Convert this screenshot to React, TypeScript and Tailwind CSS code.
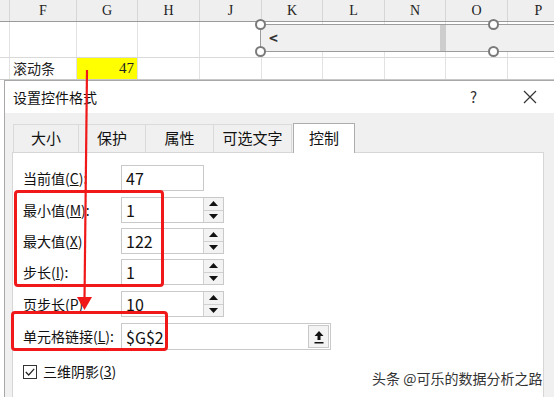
const ui = { fontFamily: '"Noto Sans CJK SC", "Noto Sans", sans-serif' };
const serif = { fontFamily: '"Liberation Serif", "Noto Sans CJK SC", serif' };

const cols = [
  { name: "", w: 10 },
  { name: "F", w: 67 },
  { name: "G", w: 61 },
  { name: "H", w: 62 },
  { name: "J", w: 62 },
  { name: "K", w: 61 },
  { name: "L", w: 62 },
  { name: "N", w: 61 },
  { name: "O", w: 62 },
  { name: "P", w: 62 },
];

function Handle({ x, y }: { x: number; y: number }) {
  return (
    <div
      className="absolute h-[11px] w-[11px] rounded-full border-2 border-[#7a7a7a] bg-white"
      style={{ left: x - 5.5, top: y - 5.5 }}
    />
  );
}

function Spinner() {
  return (
    <div className="flex h-full w-[20px] flex-col border-l border-[#d0d0d0] bg-[#f3f3f3]">
      <div className="flex flex-1 items-center justify-center border-b border-[#d0d0d0]">
        <svg width="9" height="5" viewBox="0 0 9 5">
          <polygon points="0,5 9,5 4.5,0" fill="#111" />
        </svg>
      </div>
      <div className="flex flex-1 items-center justify-center">
        <svg width="9" height="5" viewBox="0 0 9 5">
          <polygon points="0,0 9,0 4.5,5" fill="#111" />
        </svg>
      </div>
    </div>
  );
}

function Row({
  label,
  value,
  spin,
  width,
  className,
}: {
  label: React.ReactNode;
  value: string;
  spin?: boolean;
  width: number;
  className?: string;
}) {
  return (
    <div className={"flex h-[26px] items-center " + (className ?? "")}>
      <div className="w-[98px] text-[14px] text-[#111]">{label}</div>
      <div
        className="flex h-full items-stretch border border-[#c9c9c9] bg-white"
        style={{ width }}
      >
        <div className="flex flex-1 items-center pl-[4px] text-[16px] text-[#111]">{value}</div>
        {spin && <Spinner />}
      </div>
    </div>
  );
}

export default function App() {
  return (
    <div className="relative h-[397px] w-[554px] overflow-hidden bg-white" style={ui}>
      {/* sheet */}
      <div className="h-[80px]">
        <div className="flex h-[22px] border-b border-[#9a9a9a] bg-[#efefef]" style={serif}>
          {cols.map((c, i) => (
            <div
              key={i}
              className="flex shrink-0 items-center justify-center border-r border-[#d6d6d6] text-[14px] text-[#222]"
              style={{ width: c.w }}
            >
              {c.name}
            </div>
          ))}
        </div>
        <div className="flex h-[36px] border-b border-[#d9d9d9]">
          {cols.map((c, i) => (
            <div key={i} className="shrink-0 border-r border-[#e2e2e2]" style={{ width: c.w }} />
          ))}
        </div>
        <div className="flex h-[22px] border-b border-[#c8c8c8]">
          {cols.map((c, i) => (
            <div
              key={i}
              className={
                "flex shrink-0 items-center border-r border-[#e2e2e2] text-[14px] text-[#222] " +
                (i === 2 ? "justify-end bg-[#ffff00] pr-[3px] text-[15px]" : "pl-[3px]")
              }
              style={{ width: c.w, ...(i === 2 ? serif : {}) }}
            >
              {i === 1 ? "滚动条" : i === 2 ? "47" : ""}
            </div>
          ))}
        </div>
      </div>

      {/* scroll bar control */}
      <div className="absolute left-[260px] top-[24px] flex h-[28px] w-[320px] items-center border border-r-0 border-[#9c9c9c] bg-[#f0f0f0]">
        <span className="ml-[8px] text-[15px] font-bold text-[#333]">&lt;</span>
        <div className="ml-[162px] h-full w-[6px] bg-[#cdcdcd]" />
      </div>
      <Handle x={260} y={24} />
      <Handle x={260} y={51} />
      <Handle x={493} y={24} />
      <Handle x={493} y={51} />

      {/* dialog */}
      <div className="ml-[4px] h-[317px] border-l border-t border-[#a8a8a8] bg-[#f0f0f0]">
        <div className="flex h-[32px] items-center bg-white pl-[8px] text-[14px] text-[#111]">
          <span>设置控件格式</span>
          <span className="ml-auto mr-[46px] text-[15px] text-[#333]">?</span>
          <svg className="mr-[17px]" width="14" height="14" viewBox="0 0 14 14">
            <path d="M1 1L13 13M13 1L1 13" stroke="#333" strokeWidth="1.2" />
          </svg>
        </div>
        <div className="flex h-[39px] items-end pl-[8px] text-[15px] text-[#111]">
          {[
            ["大小", 66],
            ["保护", 67],
            ["属性", 68],
            ["可选文字", 78],
          ].map(([t, w]) => (
            <div
              key={t as string}
              className="flex h-[28px] items-center justify-center border-r border-t border-[#dadada] first:border-l"
              style={{ width: w as number }}
            >
              {t}
            </div>
          ))}
          <div className="relative z-10 -mb-px ml-[1px] flex h-[30px] w-[62px] items-center justify-center border border-b-0 border-[#adadad] bg-white">
            控制
          </div>
        </div>
        <div className="ml-[7px] mr-[10px] h-[260px] border border-[#d6d6d6] bg-white pl-[10px] pt-[12px]">
          <Row label={<>当前值(<u>C</u>):</>} value="47" width={83} />
          <Row className="mt-[6px]" label={<>最小值(<u>M</u>):</>} value="1" spin width={103} />
          <Row className="mt-[5px]" label={<>最大值(<u>X</u>)</>} value="122" spin width={103} />
          <Row className="mt-[5px]" label={<>步长(<u>I</u>):</>} value="1" spin width={103} />
          <Row className="mt-[6px]" label={<>页步长(<u>P</u>)</>} value="10" spin width={103} />
          <div className="mt-[6px] flex h-[27px] items-center">
            <div className="w-[98px] text-[14px] text-[#111]">
              单元格链接(<u>L</u>):
            </div>
            <div className="flex h-full w-[210px] items-stretch border border-[#c9c9c9] bg-white">
              <div className="flex flex-1 items-center pl-[4px] text-[16px] text-[#111]">$G$2</div>
              <div className="m-[1px] flex w-[21px] items-center justify-center border border-[#c9c9c9] bg-[#f3f3f3]">
                <svg width="10" height="14" viewBox="0 0 10 14">
                  <polygon points="5,1 9.5,6 6.5,6 6.5,10 3.5,10 3.5,6 0.5,6" fill="#111" />
                  <rect x="0.5" y="12" width="9" height="1.5" fill="#111" />
                </svg>
              </div>
            </div>
          </div>
          <div className="mt-[11px] flex items-center text-[14px] text-[#111]">
            <div className="flex h-[14px] w-[14px] items-center justify-center border border-[#333] bg-white">
              <svg width="10" height="8" viewBox="0 0 10 8">
                <path d="M0.8 4L3.7 7L9.2 0.8" stroke="#222" strokeWidth="1.2" fill="none" />
              </svg>
            </div>
            <span className="ml-[6px]">
              三维阴影(<u>3</u>)
            </span>
          </div>
        </div>
      </div>

      {/* red annotations */}
      <div className="absolute left-[14px] top-[190px] h-[97px] w-[150px] rounded-[4px] border-[3px] border-[#f01818]" />
      <div className="absolute left-[11px] top-[311px] h-[40px] w-[157px] rounded-[4px] border-[3px] border-[#f01818]" />
      <svg className="absolute left-0 top-0" width="554" height="397" viewBox="0 0 554 397">
        <line x1="87" y1="70" x2="84.5" y2="300" stroke="#f01818" strokeWidth="2.2" />
        <polygon points="77,297 92,297 84.5,310" fill="#f01818" />
      </svg>

      {/* watermark */}
      <div
        className="absolute left-[372px] top-[368px] whitespace-nowrap text-[14px] text-[#333]"
        style={{ textShadow: "0 0 2px #fff, 0 0 2px #fff, 1px 1px 1px #fff" }}
      >
        头条 @可乐的数据分析之路
      </div>
    </div>
  );
}
